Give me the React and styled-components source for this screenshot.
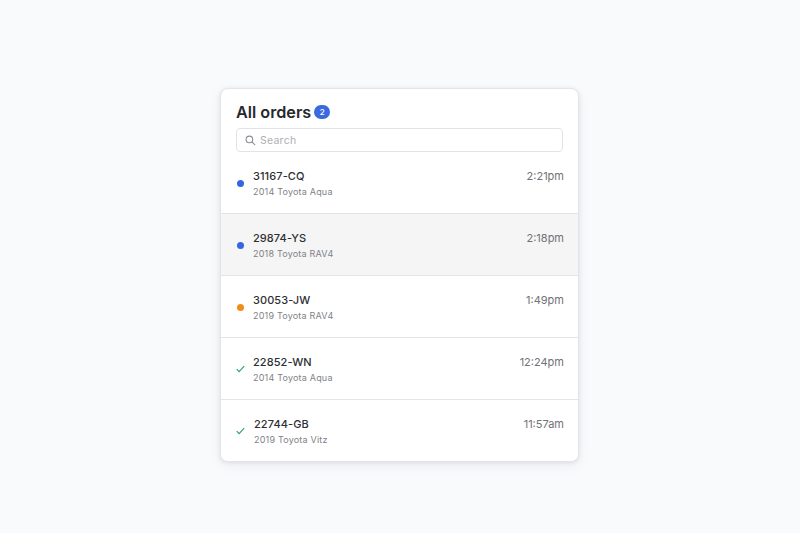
import React from "react";
import styled, { createGlobalStyle } from "styled-components";

const Global = createGlobalStyle`
  html, body { margin: 0; padding: 0; background: #f9fafc; }
  body { font-family: Inter, "Liberation Sans", sans-serif; -webkit-font-smoothing: antialiased; }
`;
const Page = styled.div`
  width: 800px; height: 533px; display: flex; justify-content: center; align-items: flex-start;
  padding: 88px 1px 0 0; box-sizing: border-box;
`;
const Card = styled.section`
  width: 359px; height: 374px; box-sizing: border-box; background: #fff; border-radius: 8px;
  border: 1px solid #e4e5e8; box-shadow: 0 1px 4px rgba(30,40,60,.10), 0 4px 14px rgba(30,40,60,.05);
  overflow: hidden; display: flex; flex-direction: column;
`;
const Header = styled.header`
  padding: 13px 15px 0; height: 63px; box-sizing: border-box; flex: none;
`;
const TitleRow = styled.div`display: flex; align-items: center; gap: 3px; height: 21px;`;
const Title = styled.h1`margin: 0; font-size: 16.2px; line-height: 21px; font-weight: 600; color: #26282c;`;
const Badge = styled.span`
  width: 16px; height: 14px; border-radius: 7px; background: #3b69e0; color: #fff; font-size: 8px; font-weight: 500;
  display: flex; align-items: center; justify-content: center; margin-top: -1px;
`;
const Search = styled.div`
  margin-top: 5px; width: 327px; height: 24px; box-sizing: border-box; border: 1px solid #e2e3e7; border-radius: 4px;
  display: flex; align-items: center; gap: 4px; padding-left: 8px; background: #fff;
`;
const SearchText = styled.span`font-size: 10.5px; color: #adafb4; letter-spacing: .25px;`;
const List = styled.ul`margin: 0; padding: 0; list-style: none; flex: 1; display: flex; flex-direction: column;`;
const Row = styled.li`
  height: 62px; box-sizing: border-box; flex: none; display: flex; align-items: flex-start;
  padding: 17px 14px 0 15px;
  background: ${p => p.$active ? "#f5f5f5" : "#fff"};
  border-bottom: ${p => p.$last ? "none" : "1px solid #e3e4e6"};
`;
const Status = styled.div`width: ${p => p.$wide ? 18 : 17}px; height: 14px; margin-top: 7px; flex: none; display: flex; align-items: center;`;
const Dot = styled.span`width: 7px; height: 7px; border-radius: 50%; margin-left: 1px; background: ${p => p.$color};`;
const Info = styled.div`flex: 1; min-width: 0;`;
const Code = styled.div`font-size: 11px; line-height: 14px; font-weight: 550; color: #2e3034; letter-spacing: .08px;`;
const Model = styled.div`margin-top: 3px; font-size: 9px; line-height: 12px; color: #808287; letter-spacing: .2px;`;
const Time = styled.time`font-size: 11px; line-height: 14px; color: #707276;`;

const orders = [
  { code: "31167-CQ", model: "2014 Toyota Aqua", time: "2:21pm", status: "#3565e0" },
  { code: "29874-YS", model: "2018 Toyota RAV4", time: "2:18pm", status: "#3565e0", active: true },
  { code: "30053-JW", model: "2019 Toyota RAV4", time: "1:49pm", status: "#f28c18" },
  { code: "22852-WN", model: "2014 Toyota Aqua", time: "12:24pm" },
  { code: "22744-GB", model: "2019 Toyota Vitz", time: "11:57am", wide: true },
];

const Check = () => (
  <svg width="9" height="8" viewBox="0 0 9 8" fill="none">
    <path d="M0.7 4.2 L3.1 6.6 L8.2 1.2" stroke="#2a9f74" strokeWidth="1.1" />
  </svg>
);
const Glass = () => (
  <svg width="11" height="11" viewBox="0 0 11 11" fill="none" stroke="#8d8f94" strokeWidth="1.1">
    <circle cx="4.4" cy="4.4" r="3.3" />
    <path d="M6.9 6.9 L10.2 10.2" />
  </svg>
);

export default function App() {
  return (
    <Page>
      <Global />
      <Card>
        <Header>
          <TitleRow><Title>All orders</Title><Badge>2</Badge></TitleRow>
          <Search><Glass /><SearchText>Search</SearchText></Search>
        </Header>
        <List>
          {orders.map((o, i) => (
            <Row key={o.code} $active={o.active} $last={i === orders.length - 1}>
              <Status $wide={o.wide}>{o.status ? <Dot $color={o.status} /> : <Check />}</Status>
              <Info><Code>{o.code}</Code><Model>{o.model}</Model></Info>
              <Time>{o.time}</Time>
            </Row>
          ))}
        </List>
      </Card>
    </Page>
  );
}
